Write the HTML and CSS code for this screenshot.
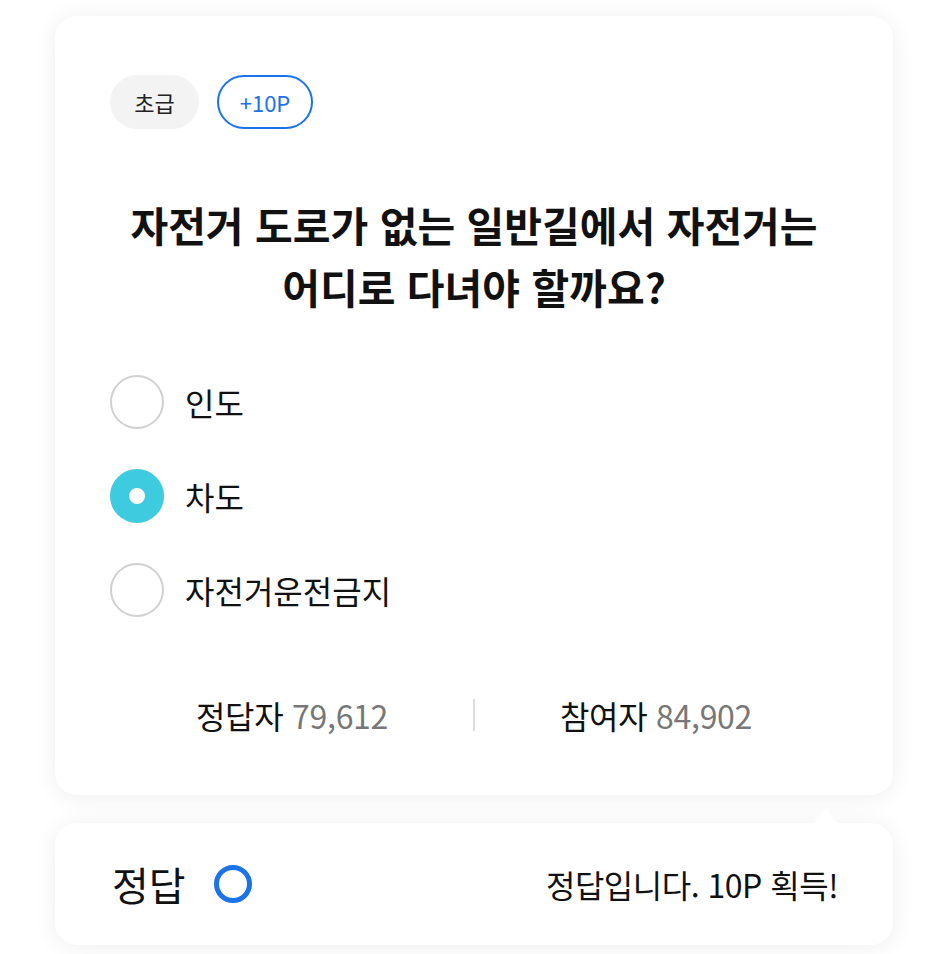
FILE: index.html
```html
<!DOCTYPE html>
<html lang="ko">
<head>
    <meta charset="UTF-8">
    <meta name="viewport" content="width=device-width, initial-scale=1.0">
    <title>퀴즈</title>
    <link rel="stylesheet" href="styles.css">
</head>
<body>
    <div class="quiz">
        <div class="quiz-card">
            <div class="tags">
                <span class="tag tag-level">초급</span>
                <span class="tag tag-point">+10P</span>
            </div>

            <h2 class="question">자전거 도로가 없는 일반길에서 자전거는<br>어디로 다녀야 할까요?</h2>

            <ul class="options">
                <li class="option"><span class="radio"></span>인도</li>
                <li class="option checked"><span class="radio"></span>차도</li>
                <li class="option"><span class="radio"></span>자전거운전금지</li>
            </ul>

            <div class="stats">
                <div class="stat">정답자 <span class="num">79,612</span></div>
                <div class="stat-divider"></div>
                <div class="stat">참여자 <span class="num">84,902</span></div>
            </div>
        </div>

        <div class="result">
            <div class="result-title">정답 <span class="ring"></span></div>
            <div class="result-msg">정답입니다. 10P 획득!</div>
        </div>
    </div>
</body>
</html>
```

FILE: styles.css
```css
body {
    font-family: "Noto Sans CJK KR", "Noto Sans", sans-serif;
    margin: 0;
    padding: 16px 0 9px;
    background-color: #fff;
    color: #111;
}
.quiz {
    width: 838px;
    margin: 0 0 0 55px;
}
.quiz-card {
    background: #fff;
    border-radius: 22px;
    padding: 59px 55px 0;
    height: 720px;
    box-shadow: 0 2px 24px rgba(0,0,0,0.07);
}
.tags {
    display: flex;
    gap: 18px;
}
.tag {
    display: inline-flex;
    align-items: center;
    justify-content: center;
    height: 54px;
    box-sizing: border-box;
    border-radius: 27px;
    font-size: 22px;
}
.tag-level {
    width: 89px;
    background: #f3f3f3;
    color: #222;
}
.tag-point {
    width: 96px;
    border: 2px solid #1a73e8;
    color: #1a73e8;
}
.question {
    margin: 64px 0 0;
    font-size: 41px;
    font-weight: 700;
    line-height: 62px;
    text-align: center;
}
.options {
    list-style-type: none;
    padding: 0;
    margin: 58px 0 0;
}
.option {
    display: flex;
    align-items: center;
    gap: 21px;
    height: 54px;
    margin-bottom: 40px;
    font-size: 32px;
}
.radio {
    width: 54px;
    height: 54px;
    box-sizing: border-box;
    border-radius: 50%;
    border: 2px solid #d0d0d0;
    background: #fff;
}
.option.checked .radio {
    border: 19px solid #3ecadf;
    background: #fff;
}
.stats {
    display: flex;
    align-items: center;
    justify-content: center;
    margin-top: 75px;
    font-size: 32px;
    letter-spacing: -0.3px;
}
.stat {
    width: 362px;
    text-align: center;
}
.num {
    color: #777;
}
.stat-divider {
    width: 2px;
    height: 32px;
    background: #ddd;
}
.result {
    position: relative;
    margin-top: 28px;
    height: 122px;
    padding: 0 55px 0 57px;
    background: #fff;
    border-radius: 22px;
    display: flex;
    align-items: center;
    justify-content: space-between;
    box-shadow: 0 2px 24px rgba(0,0,0,0.07);
}
.result::before {
    content: "";
    position: absolute;
    top: -14px;
    right: 55px;
    border-left: 12px solid transparent;
    border-right: 12px solid transparent;
    border-bottom: 14px solid #fff;
}
.result-title {
    display: flex;
    align-items: center;
    gap: 28px;
    font-size: 40px;
}
.ring {
    width: 38px;
    height: 38px;
    box-sizing: border-box;
    border-radius: 50%;
    border: 5px solid #1a73e8;
}
.result-msg {
    font-size: 32px;
    letter-spacing: -0.5px;
}
```
